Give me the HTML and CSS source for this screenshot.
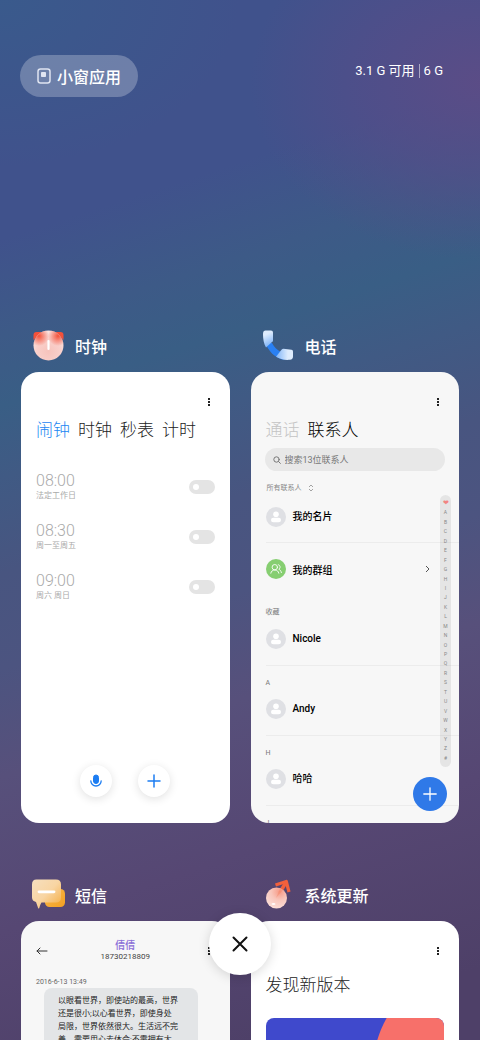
FILE: index.html
```html
<!DOCTYPE html>
<html lang="zh-CN">

<head>
	<meta charset="UTF-8">
	<meta name="viewport" content="width=device-width, initial-scale=1">
	<title>最近任务</title>
	<link rel="stylesheet" href="styles.css">
</head>

<body>
	<header class="header">
		<button class="window-btn" type="button">
			<svg width="14" height="16" viewBox="0 0 14 16" fill="none">
				<rect x="1" y="1" width="12" height="14" rx="2.5" stroke="#dfe4f1" stroke-width="1.5" />
				<rect x="4" y="4" width="5" height="5" rx="0.8" fill="#dfe4f1" />
			</svg>
			小窗应用
		</button>
		<p class="memory"><span>3.1 G 可用</span><span class="memory-total">6 G</span></p>
	</header>

	<main class="tasks">
		<section class="task">
			<h2 class="task-title">
				<svg width="36" height="36" viewBox="0 0 36 36">
					<defs>
						<radialGradient id="clock-face" cx="50%" cy="70%" r="65%">
							<stop offset="0" stop-color="#f7c3bc" />
							<stop offset="0.6" stop-color="#f9cfca" />
							<stop offset="1" stop-color="#fbe3e0" />
						</radialGradient>
						<radialGradient id="clock-ear">
							<stop offset="0" stop-color="#f4513a" />
							<stop offset="1" stop-color="#f4513a" stop-opacity="0" />
						</radialGradient>
						<clipPath id="clock-clip">
							<circle cx="17.500" cy="17.500" r="15" />
						</clipPath>
					</defs>
					<path d="M2.500 12V7q0-3 3-3h5zM32.500 12V7q0-3-3-3h-5z" fill="#f4513a" />
					<circle cx="17.500" cy="17.500" r="15" fill="url(#clock-face)" />
					<g clip-path="url(#clock-clip)">
						<circle cx="8" cy="8" r="10" fill="url(#clock-ear)" />
						<circle cx="27" cy="8" r="10" fill="url(#clock-ear)" />
					</g>
					<path d="M17.500 13v8" stroke="#fff" stroke-width="2.200" stroke-linecap="round" />
				</svg>
				时钟
			</h2>
			<article class="card">
				<div class="topbar topbar-end">
					<button class="more" type="button" aria-label="更多"><i></i><i></i><i></i></button>
				</div>
				<nav class="tabs">
					<button class="tab tab-blue" type="button">闹钟</button>
					<button class="tab" type="button">时钟</button>
					<button class="tab" type="button">秒表</button>
					<button class="tab" type="button">计时</button>
				</nav>
				<div class="alarms">
					<label class="alarm">
						<span class="alarm-text"><span class="alarm-time">08:00</span><span class="alarm-days">法定工作日</span></span>
						<input class="switch" type="checkbox">
					</label>
					<label class="alarm">
						<span class="alarm-text"><span class="alarm-time">08:30</span><span class="alarm-days">周一至周五</span></span>
						<input class="switch" type="checkbox">
					</label>
					<label class="alarm">
						<span class="alarm-text"><span class="alarm-time">09:00</span><span class="alarm-days">周六 周日</span></span>
						<input class="switch" type="checkbox">
					</label>
				</div>
				<div class="alarm-actions">
					<button class="round-btn" type="button" aria-label="语音">
						<svg width="14" height="14" viewBox="0 0 14 14" fill="none" stroke="#1c7df2">
							<rect x="4.500" y="1" width="5" height="8.500" rx="2.500" fill="#1c7df2" />
							<path d="M1.800 6.800a5.200 5.200 0 0 0 10.400 0" stroke-width="1.300" stroke-linecap="round" />
						</svg>
					</button>
					<button class="round-btn" type="button" aria-label="添加闹钟">
						<svg width="14" height="14" viewBox="0 0 14 14" stroke="#1c7df2" stroke-width="1.500" stroke-linecap="round">
							<path d="M7 1v12M1 7h12" />
						</svg>
					</button>
				</div>
			</article>
		</section>

		<section class="task">
			<h2 class="task-title">
				<svg width="36" height="36" viewBox="0 0 36 36">
					<defs>
						<linearGradient id="phone-top" x1="0" y1="0" x2="0.300" y2="1">
							<stop offset="0.300" stop-color="#deecfd" />
							<stop offset="1" stop-color="#7fb4f8" />
						</linearGradient>
						<linearGradient id="phone-bottom" x1="1" y1="0.500" x2="0" y2="0.500">
							<stop offset="0.300" stop-color="#deecfd" />
							<stop offset="1" stop-color="#7fb4f8" />
						</linearGradient>
					</defs>
					<path d="M4 14c3 9 10 16 19 18l-3-8c-4-2-7-5-9-9z" fill="#2a80f3" />
					<path d="M4.500 2.500h5.500q2 0 2 2v8q0 1-1 1.500L5 19.500C2.800 15.500 2 11 2 6 2 3.500 3 2.500 4.500 2.500z" fill="url(#phone-top)" />
					<path d="M32 23.500v5q0 3-3 3.300c-5.500.500-10-.500-14-3l5.500-7q.800-1 2-1l8 1q1.500.200 1.500 1.700z" fill="url(#phone-bottom)" />
				</svg>
				电话
			</h2>
			<article class="card card-gray">
				<div class="topbar topbar-end">
					<button class="more" type="button" aria-label="更多"><i></i><i></i><i></i></button>
				</div>
				<nav class="tabs">
					<button class="tab tab-muted" type="button">通话</button>
					<button class="tab tab-active" type="button">联系人</button>
				</nav>
				<label class="search">
					<svg width="8" height="8" viewBox="0 0 8 8" fill="none" stroke="#777" stroke-linecap="round">
						<circle cx="3.500" cy="3.500" r="2.700" />
						<path d="M5.600 5.600l1.800 1.800" />
					</svg>
					<input class="search-input" type="text" placeholder="搜索13位联系人" aria-label="搜索联系人">
				</label>
				<button class="filter" type="button">
					所有联系人
					<svg width="6" height="8" viewBox="0 0 6 8" fill="none" stroke="#999" stroke-width="0.900">
						<path d="M1 3l2-2 2 2M1 5l2 2 2-2" />
					</svg>
				</button>
				<svg class="sprite">
					<symbol id="person" viewBox="0 0 20 20">
						<circle cx="10" cy="10" r="10" fill="#dfe0e4" />
						<circle cx="10" cy="7.300" r="2.800" fill="#fff" />
						<rect x="5" y="10.700" width="10" height="4.600" rx="2.300" fill="#fff" />
					</symbol>
				</svg>
				<div class="contacts">
					<a class="contact" href="#me"><svg class="avatar"><use href="#person" /></svg>我的名片</a>
					<a class="contact contact-last" href="#groups">
						<svg class="avatar" viewBox="0 0 20 20" fill="none" stroke="#fff" stroke-width="0.900" stroke-linecap="round">
							<circle cx="10" cy="10" r="10" fill="#86ce71" stroke="none" />
							<circle cx="8.800" cy="8.200" r="2.700" />
							<path d="M4.800 14.200c.4-2 1.800-3.200 4-3.200s3.600 1.200 4 3.200M12.300 5.700c2 .3 2.600 3.200.5 4.600 1.500.6 2.300 1.700 2.600 3.300" />
						</svg>
						我的群组
						<svg class="chevron" width="5" height="8" viewBox="0 0 5 8" fill="none" stroke="#555">
							<path d="M1 1l3 3-3 3" />
						</svg>
					</a>
					<h3 class="group-name">收藏</h3>
					<a class="contact" href="#nicole"><svg class="avatar"><use href="#person" /></svg>Nicole</a>
					<h3 class="group-name">A</h3>
					<a class="contact" href="#andy"><svg class="avatar"><use href="#person" /></svg>Andy</a>
					<h3 class="group-name">H</h3>
					<a class="contact" href="#haha"><svg class="avatar"><use href="#person" /></svg>哈哈</a>
					<h3 class="group-name">J</h3>
				</div>
				<nav class="index-bar" aria-label="索引">
					<a class="index-heart" href="#fav">❤</a>
					<a href="#a">A</a>
					<a href="#b">B</a>
					<a href="#c">C</a>
					<a href="#d">D</a>
					<a href="#e">E</a>
					<a href="#f">F</a>
					<a href="#g">G</a>
					<a href="#h">H</a>
					<a href="#i">I</a>
					<a href="#j">J</a>
					<a href="#k">K</a>
					<a href="#l">L</a>
					<a href="#m">M</a>
					<a href="#n">N</a>
					<a href="#o">O</a>
					<a href="#p">P</a>
					<a href="#q">Q</a>
					<a href="#r">R</a>
					<a href="#s">S</a>
					<a href="#t">T</a>
					<a href="#u">U</a>
					<a href="#v">V</a>
					<a href="#w">W</a>
					<a href="#x">X</a>
					<a href="#y">Y</a>
					<a href="#z">Z</a>
					<a href="#other">#</a>
				</nav>
				<button class="fab" type="button" aria-label="新建联系人">
					<svg width="14" height="14" viewBox="0 0 14 14" stroke="#fff" stroke-width="1.300" stroke-linecap="round">
						<path d="M7 .8v12.400M.8 7h12.400" />
					</svg>
				</button>
			</article>
		</section>

		<section class="task">
			<h2 class="task-title">
				<svg width="36" height="36" viewBox="0 0 36 36">
					<defs>
						<linearGradient id="sms-back" x1="0" y1="0" x2="1" y2="1">
							<stop offset="0" stop-color="#f8b84e" />
							<stop offset="1" stop-color="#f3a021" />
						</linearGradient>
						<linearGradient id="sms-front" x1="0" y1="0" x2="1" y2="1">
							<stop offset="0" stop-color="#f6dfbf" />
							<stop offset="0.500" stop-color="#f8d5a3" />
							<stop offset="1" stop-color="#f5ab3d" />
						</linearGradient>
					</defs>
					<rect x="14" y="12" width="20" height="18" rx="4.500" fill="url(#sms-back)" />
					<path d="M5.500 2.500H25q5 0 5 5v13q0 5-5 5H10.500c-1 1.500-1.600 3.500-2.200 5.500q-.600 1-1.200 0L5 25Q1 24 1 20.500v-13q0-5 4.500-5z" fill="url(#sms-front)" />
					<path d="M8 14.800h15" stroke="#fff" stroke-width="2.800" stroke-linecap="round" />
				</svg>
				短信
			</h2>
			<article class="card card-gray">
				<div class="topbar">
					<button class="back" type="button" aria-label="返回">
						<svg width="12" height="8" viewBox="0 0 12 8" fill="none" stroke="#333" stroke-linecap="round" stroke-linejoin="round">
							<path d="M11 4H1M4 1L1 4l3 3" />
						</svg>
					</button>
					<div class="sender">
						<h3 class="sender-name">倩倩</h3>
						<p class="sender-number">18730218809</p>
					</div>
					<button class="more" type="button" aria-label="更多"><i></i><i></i><i></i></button>
				</div>
				<time class="sms-time">2016-6-13 13:49</time>
				<p class="bubble">以眼看世界，即使站的最高，世界<br>还是很小;以心看世界，即使身处<br>局限，世界依然很大。生活远不完<br>善，需要用心去体会;不需拥有大</p>
			</article>
		</section>

		<section class="task">
			<h2 class="task-title">
				<svg width="36" height="36" viewBox="0 0 36 36">
					<defs>
						<radialGradient id="update-ball" cx="65%" cy="20%" r="80%">
							<stop offset="0" stop-color="#f79a86" />
							<stop offset="0.500" stop-color="#f8c6bb" />
							<stop offset="1" stop-color="#fbdcd5" />
						</radialGradient>
					</defs>
					<path d="M18 17L25.500 4.500" stroke="#f2603c" stroke-width="3.500" />
					<path d="M14.500 8L25.300 4.500l2.700 10.500" fill="none" stroke="#f2603c" stroke-width="3.200" stroke-linejoin="round" />
					<circle cx="15.500" cy="21" r="10.500" fill="url(#update-ball)" />
					<path d="M15 21l4-9.500 3 1.500z" fill="#f3734f" opacity="0.300" />
					<ellipse cx="12.500" cy="27" rx="2" ry="1" fill="#fff" opacity="0.900" />
				</svg>
				系统更新
			</h2>
			<article class="card">
				<div class="topbar topbar-end">
					<button class="more" type="button" aria-label="更多"><i></i><i></i><i></i></button>
				</div>
				<h3 class="update-title">发现新版本</h3>
				<svg class="banner" viewBox="0 0 177 177" preserveAspectRatio="xMidYMin slice">
					<rect width="177" height="177" fill="#3f49cc" />
					<circle cx="212" cy="52" r="106" fill="#f7706a" />
				</svg>
			</article>
		</section>
	</main>

	<button class="close" type="button" aria-label="清除全部">
		<svg width="16" height="16" viewBox="0 0 16 16" stroke="#111" stroke-width="2" stroke-linecap="round">
			<path d="M1.500 1.500l13 13M14.500 1.500l-13 13" />
		</svg>
	</button>
</body>

</html>
```
FILE: styles.css
```css
* {
	box-sizing: border-box;
}

body {
	margin: 0;
	height: 100vh;
	overflow: hidden;
	font-family: Roboto, "Noto Sans CJK SC", sans-serif;
	color: #222;
	background:
		radial-gradient(ellipse 48% 17% at 100% 8%, rgba(92, 76, 134, 0.95), rgba(88, 76, 136, 0.6) 50%, rgba(80, 78, 138, 0)),
		radial-gradient(ellipse 50% 16% at 0 0, rgba(56, 92, 140, 0.8), rgba(56, 92, 140, 0)),
		linear-gradient(162deg, #40528c 0%, #40528c 20%, #3d5a87 28%, #395e85 34%, #405a84 40%, #485580 48%, #4c5480 56%, #57507b 65%, #564773 78%, #4e4068 94%);
}

button {
	padding: 0;
	border: 0;
	background: none;
	font-family: inherit;
	color: inherit;
}

a {
	color: inherit;
	text-decoration: none;
}

h2,
h3,
p {
	margin: 0;
}

svg {
	display: block;
	flex: none;
}

.header {
	display: flex;
	justify-content: space-between;
	align-items: flex-start;
	padding: 55px 37px 0 20px;
	color: #fff;
}

.window-btn {
	display: flex;
	align-items: center;
	gap: 6px;
	height: 42px;
	padding: 0 17px;
	border-radius: 21px;
	background: rgba(255, 255, 255, 0.25);
	font-size: 16px;
	font-weight: 500;
}

.memory {
	display: flex;
	align-items: center;
	padding-top: 6px;
	font-size: 13px;
	line-height: 20px;
}

.memory-total {
	margin-left: 4px;
	padding-left: 4px;
	border-left: 1px solid rgba(255, 255, 255, 0.5);
	line-height: 14px;
}

/* task grid */
.tasks {
	display: grid;
	grid-template-columns: 1fr 1fr;
	gap: 54px 21px;
	padding: 231px 21px 0;
}

.task-title {
	display: flex;
	align-items: flex-end;
	gap: 8px;
	height: 36px;
	margin-bottom: 8px;
	padding-left: 10px;
	font-size: 16px;
	font-weight: 500;
	line-height: 32px;
	color: #fff;
}

.card {
	position: relative;
	display: flex;
	flex-direction: column;
	aspect-ratio: 208 / 450;
	padding: 18px 15px 0;
	border-radius: 18px;
	background: #fff;
	overflow: hidden;
}

.card-gray {
	background: #f7f7f7;
}

.topbar {
	display: flex;
	flex: none;
	align-items: center;
	justify-content: space-between;
	height: 24px;
}

.topbar-end {
	justify-content: flex-end;
}

.more {
	display: flex;
	flex-direction: column;
	align-items: center;
	gap: 1px;
	width: 12px;
}

.more i {
	width: 2px;
	height: 2px;
	background: #222;
}

.tabs {
	display: flex;
	flex: none;
	gap: 8px;
	margin-top: 4px;
}

.tab {
	font-size: 17px;
	font-weight: 300;
	line-height: 24px;
}

.tab-blue {
	color: #1c87f2;
}

.tab-muted {
	color: #c4c4c4;
}

.tab-active {
	color: #000;
}

/* clock */
.alarms {
	margin-top: 20px;
}

.alarm {
	display: flex;
	align-items: center;
	justify-content: space-between;
	height: 50px;
	color: #aaa;
}

.alarm-text {
	display: flex;
	flex-direction: column;
}

.alarm-time {
	font-size: 16px;
	font-weight: 300;
	line-height: 18px;
}

.alarm-days {
	font-size: 8px;
	line-height: 12px;
}

.switch {
	appearance: none;
	display: flex;
	align-items: center;
	width: 26px;
	height: 14px;
	margin: 0;
	padding: 0 4px;
	border-radius: 7px;
	background: #e4e4e4;
}

.switch::before {
	content: "";
	width: 6px;
	height: 6px;
	border-radius: 50%;
	background: #fff;
}

.switch:checked {
	justify-content: flex-end;
	background: #1c7df2;
}

.alarm-actions {
	display: flex;
	justify-content: center;
	gap: 26px;
	margin-top: auto;
	padding-bottom: 26px;
}

.round-btn {
	display: grid;
	place-items: center;
	width: 32px;
	height: 32px;
	border-radius: 50%;
	background: #fff;
	box-shadow: 0 2px 10px rgba(0, 0, 0, 0.12);
}

/* contacts */
.search {
	display: flex;
	flex: none;
	align-items: center;
	gap: 4px;
	height: 23px;
	margin: 6px -1px 0;
	padding: 0 8px;
	border-radius: 12px;
	background: #e8e8e8;
}

.search-input {
	flex: 1;
	min-width: 0;
	padding: 0;
	border: 0;
	outline: 0;
	background: none;
	font-family: inherit;
	font-size: 9px;
}

.search-input::placeholder {
	color: #777;
}

.filter {
	display: flex;
	flex: none;
	align-items: center;
	gap: 6px;
	margin-top: 11px;
	padding-left: 1px;
	font-size: 7px;
	line-height: 12px;
	color: #888;
}

.contacts {
	flex: none;
	margin-right: -15px;
	padding-top: 13px;
}

.contact {
	display: flex;
	align-items: center;
	gap: 7px;
	height: 52px;
	border-bottom: 1px solid #ececec;
	font-size: 10px;
	font-weight: 500;
	color: #000;
}

.contact:first-child,
.group-name + .contact {
	align-items: flex-start;
	height: 37px;
	line-height: 20px;
}

.contact:first-child {
	height: 36px;
}

.contact-last {
	border-bottom: 0;
}

.avatar {
	width: 20px;
	height: 20px;
}

.chevron {
	margin-left: auto;
	margin-right: 29px;
}

.group-name {
	padding: 11px 0;
	font-size: 7px;
	font-weight: 400;
	line-height: 12px;
	color: #777;
}

.group-name + .contact + .group-name {
	padding-bottom: 10px;
}

.sprite {
	position: absolute;
	width: 0;
	height: 0;
}

.index-bar {
	position: absolute;
	top: 123px;
	right: 8px;
	bottom: 56px;
	display: flex;
	flex-direction: column;
	justify-content: space-between;
	width: 11px;
	padding: 4px 0;
	border-radius: 6px;
	background: rgba(0, 0, 0, 0.07);
	font-size: 5px;
	line-height: 9px;
	text-align: center;
	color: #888;
}

.index-heart {
	font-size: 7px;
	color: #f28482;
}

.fab {
	position: absolute;
	right: 12px;
	bottom: 12px;
	display: grid;
	place-items: center;
	width: 34px;
	height: 34px;
	border-radius: 50%;
	background: #2f79e8;
}

/* messages */
.sender {
	text-align: center;
}

.sender-name {
	font-size: 10px;
	font-weight: 500;
	line-height: 12px;
	color: #8c70d8;
}

.sender-number {
	font-size: 8px;
	line-height: 10px;
	color: #444;
}

.sms-time {
	margin-top: 14px;
	font-size: 7px;
	line-height: 10px;
	color: #666;
}

.bubble {
	margin: 1px 17px 0 8px;
	padding: 6px 14px;
	border-radius: 8px;
	background: #e3e5e7;
	font-size: 8px;
	line-height: 13px;
	white-space: nowrap;
}

/* system update */
.update-title {
	margin-top: 10px;
	font-size: 17px;
	font-weight: 300;
	line-height: 24px;
}

.banner {
	width: 100%;
	margin-top: 21px;
	border-radius: 8px;
}

.close {
	position: fixed;
	left: 50%;
	bottom: 65px;
	display: grid;
	place-items: center;
	width: 62px;
	height: 62px;
	border-radius: 50%;
	background: #fff;
	box-shadow: 0 2px 12px rgba(0, 0, 0, 0.15);
	transform: translateX(-50%);
}
```
